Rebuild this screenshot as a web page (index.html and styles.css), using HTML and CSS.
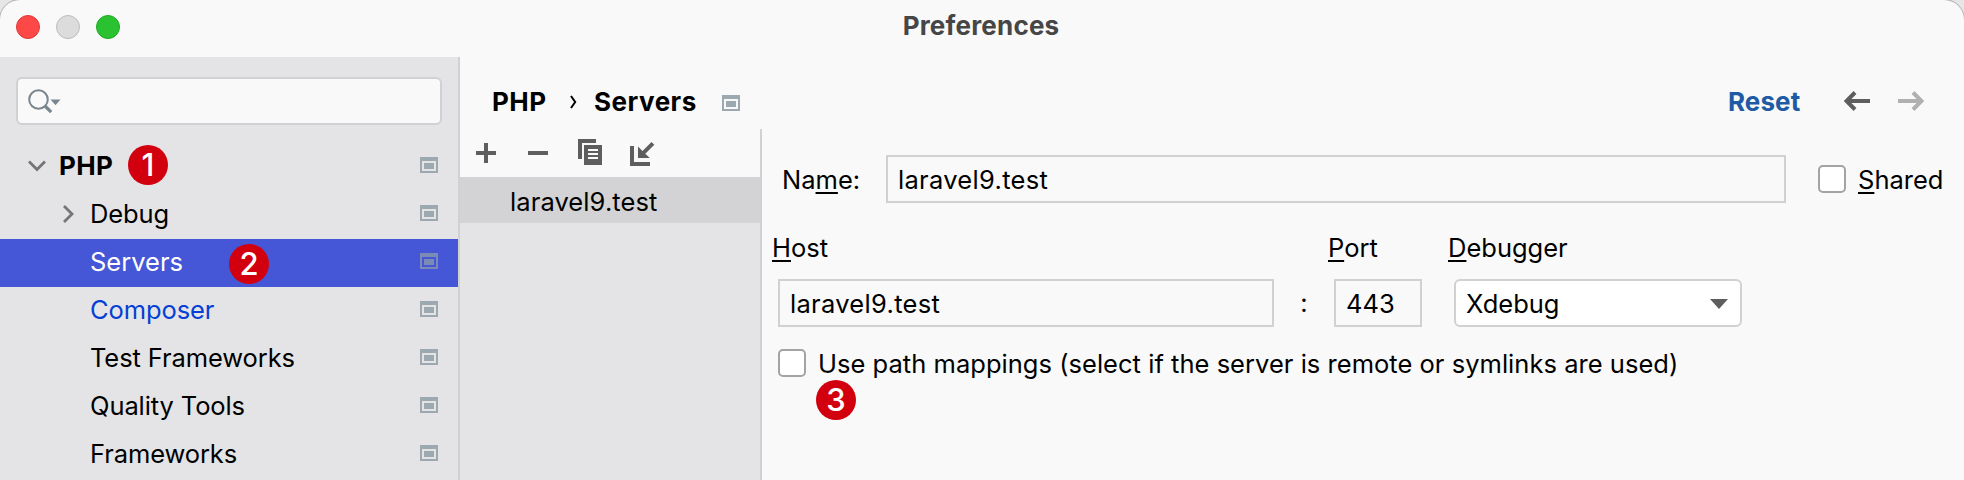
FILE: index.html
```html
<!DOCTYPE html>
<html lang="en">
<head>
<meta charset="utf-8">
<title>Preferences</title>
<link rel="stylesheet" href="styles.css">
</head>
<body>
<svg class="defs" width="0" height="0" aria-hidden="true">
  <symbol id="project" viewBox="0 0 18 16"><path fill-rule="evenodd" d="M0 0H18V16H0ZM2 4V14H16V4Z"/><path d="M4 6H14V12H4Z"/></symbol>
</svg>
<div class="window">
  <header class="titlebar">
    <div class="lights"><i class="light red"></i><i class="light gray"></i><i class="light green"></i></div>
    <h1 class="title">Preferences</h1>
  </header>
  <div class="body">
    <aside class="sidebar">
      <div class="search">
        <svg width="34" height="26" viewBox="0 0 34 26"><circle cx="10.5" cy="10.5" r="9.3" fill="none" stroke="#7a868e" stroke-width="2"/><path d="M17 17L23.2 23.2" stroke="#7a868e" stroke-width="3.2"/><path d="M22.5 10.5H32.500L27.500 16.2Z" fill="#7a868e"/></svg>
      </div>
      <nav class="tree">
        <div class="row root"><svg class="chev" width="20" height="20" viewBox="0 0 20 20"><path d="M2 5.500L10 13.500L18 5.500"/></svg><span class="label">PHP</span><b class="badge b1">1</b><svg class="proj"><use href="#project"/></svg></div>
        <div class="row"><svg class="chev" width="20" height="20" viewBox="0 0 20 20"><path d="M8 2L16 10L8 18"/></svg><span class="label">Debug</span><svg class="proj"><use href="#project"/></svg></div>
        <div class="row leaf selected"><span class="label">Servers</span><b class="badge b2">2</b><svg class="proj"><use href="#project"/></svg></div>
        <div class="row leaf link"><span class="label">Composer</span><svg class="proj"><use href="#project"/></svg></div>
        <div class="row leaf"><span class="label">Test Frameworks</span><svg class="proj"><use href="#project"/></svg></div>
        <div class="row leaf"><span class="label">Quality Tools</span><svg class="proj"><use href="#project"/></svg></div>
        <div class="row leaf"><span class="label">Frameworks</span><svg class="proj"><use href="#project"/></svg></div>
      </nav>
    </aside>
    <main class="main">
      <div class="crumbs">
        <span class="crumb c1">PHP</span>
        <svg class="sep" width="7" height="14" viewBox="0 0 7 14"><path d="M1 1L5.200 7L1 13" fill="none" stroke="#000" stroke-width="2"/></svg>
        <span class="crumb c2">Servers</span>
        <svg class="proj"><use href="#project"/></svg>
        <span class="reset">Reset</span>
        <svg class="arrow" width="26" height="20" viewBox="0 0 26 20"><path d="M26 10H3M11 1.500L2.500 10L11 18.500"/></svg>
        <svg class="arrow off" width="26" height="20" viewBox="0 0 26 20"><path d="M0 10H23M15 1.500L23.500 10L15 18.500"/></svg>
      </div>
      <div class="content">
        <section class="list">
          <div class="toolbar">
            <svg width="20" height="20" viewBox="0 0 20 20"><path d="M8 0h4v8h8v4h-8v8h-4v-8H0V8h8Z"/></svg>
            <svg width="20" height="20" viewBox="0 0 20 20"><path d="M0 8h20v4H0Z"/></svg>
            <svg class="copy" width="24" height="26" viewBox="0 0 24 26"><path d="M0 0H18V4H4V20H0Z"/><path fill-rule="evenodd" d="M6 6H24V26H6ZM10 10V12H20V10ZM10 14V16H20V14ZM10 18V20H20V18Z"/></svg>
            <svg class="import" width="25" height="25" viewBox="0 0 25 25"><path d="M0 5H4V21H20V25H0Z"/><path d="M8 5.500L12.500 10L21.500 1L24.300 3.800L15.300 12.800L19.800 17H8Z"/></svg>
          </div>
          <div class="item">laravel9.test</div>
        </section>
        <form class="form">
          <div class="name-row"><label class="name">Na<u>m</u>e:</label><div class="field grow">laravel9.test</div><i class="check"></i><label class="shared"><u>S</u>hared</label></div>
          <div class="labels"><label><u>H</u>ost</label><label><u>P</u>ort</label><label><u>D</u>ebugger</label></div>
          <div class="fields"><div class="field host">laravel9.test</div><span class="colon">:</span><div class="field port">443</div><div class="field select"><span>Xdebug</span><svg width="18" height="10" viewBox="0 0 18 10"><path d="M0 0H18L9 10Z" fill="#5e5e5e"/></svg></div></div>
          <div class="mapping"><i class="check"></i><label>Use path mappings (select if the server is remote or symlinks are used)</label><b class="badge b3">3</b></div>
        </form>
      </div>
    </main>
  </div>
</div>
</body>
</html>
```
FILE: styles.css
```css
* { box-sizing: border-box; }
body { margin: 0; background: #e6e6e6; font: 25.5px/46px Inter, "Liberation Sans", sans-serif; color: #000; }
svg { display: block; flex: none; }
.defs { position: absolute; }
.window { width: 1964px; height: 480px; overflow: hidden; display: flex; flex-direction: column; background: #f9f9f9; border-radius: 20px 20px 0 0; box-shadow: 0 0 0 1px #b5b5b5; }
.titlebar { height: 57px; flex: none; display: grid; grid-template-columns: 1fr auto 1fr; padding: 0 16px; }
.lights { display: flex; gap: 16px; padding-top: 15px; }
.light { width: 24px; height: 24px; border-radius: 50%; border: 1px solid; }
.red { background: #fc4948; border-color: #e0383a; }
.gray { background: #dcdcdc; border-color: #bcbcbc; }
.green { background: #2bc232; border-color: #1fa823; }
.title { margin: 0 2px 0 0; font-size: 26px; line-height: 51px; letter-spacing: 0.2px; font-weight: 700; color: #464646; }
.body { flex: 1; display: flex; min-height: 0; }
.sidebar { width: 460px; flex: none; background: #e4e4e6; border-right: 2px solid #d1d1d3; padding-top: 20px; }
.search { margin: 0 16px; width: 426px; height: 48px; border: 2px solid #d1d1d3; border-radius: 6px; background: #f9f9f9; padding: 10px 0 0 10px; }
.tree { padding-top: 18px; }
.row { position: relative; height: 48px; display: flex; align-items: center; padding: 0 20px 2px 56px; letter-spacing: -0.1px; }
.row.root { padding-left: 27px; }
.row.leaf { padding-left: 90px; }
.root .label { font-weight: 700; font-size: 26px; letter-spacing: 0.4px; }
.row .chev { margin-right: 14px; fill: none; stroke: #757575; stroke-width: 2.8; }
.root .chev { margin-right: 12px; }
.proj { width: 18px; height: 16px; fill: #9da9b1; }
.row .proj { margin-left: auto; margin-top: -2px; }
.selected { background: #4556d7; color: #fff; letter-spacing: 0; }
.selected .proj { fill: #7c8bb3; }
.link { color: #0540d6; }
.badge { position: absolute; width: 40px; height: 40px; border-radius: 50%; background: #d2000f; color: #fff; font-size: 31px; line-height: 40px; font-weight: 500; text-align: center; letter-spacing: 0; }
.b1 { left: 128px; top: 2px; }
.b2 { left: 229px; top: 5px; }
.b3 { left: 38px; top: 41px; }
.main { flex: 1; display: flex; flex-direction: column; min-width: 0; }
.crumbs { height: 72px; flex: none; display: flex; align-items: center; padding: 18px 40px 0 32px; font-weight: 700; font-size: 26px; line-height: 54px; letter-spacing: 0.5px; }
.crumb.c1 { width: 78px; }
.sep { margin-right: 17px; }
.crumb.c2 { width: 128px; }
.crumbs .proj { margin-top: 2px; }
.reset { margin-left: auto; width: 116px; color: #1f5ba5; letter-spacing: 0.1px; }
.arrow { margin-top: -2px; fill: none; stroke: #5e5e5e; stroke-width: 4; }
.arrow.off { margin-left: 28px; stroke: #b0b0b0; }
.crumb, .reset { margin-top: -1px; }
.content { flex: 1; display: flex; min-height: 0; }
.list { width: 302px; flex: none; border-right: 2px solid #d1d1d3; background: #e4e4e6; }
.toolbar { height: 48px; display: flex; gap: 32px; align-items: flex-start; padding: 14px 0 0 16px; background: #f9f9f9; fill: #5e5e5e; }
.copy { margin: -4px 0 0 -2px; }
.import { margin: -2px 0 0 -4px; }
.item { height: 46px; padding: 2px 0 0 50px; background: #d3d3d5; letter-spacing: 0.1px; }
.form { flex: 1; margin: 0; padding: 26px 0 0 10px; min-width: 0; }
.form u { text-decoration: underline 2px; text-underline-offset: 3px; text-decoration-skip-ink: none; }
.name-row { display: flex; align-items: center; padding-left: 10px; height: 48px; }
.name-row label { padding-top: 1px; }
.name { width: 104px; }
.field { height: 48px; border: 2px solid #d1d1d1; padding: 1px 0 0 10px; line-height: 44px; letter-spacing: 0.3px; }
.name-row .field { width: 900px; }
.check { width: 28px; height: 28px; flex: none; border: 2px solid #a3a3a3; border-radius: 5px; background: #fff; }
.name-row .check { margin: 0 12px 0 32px; }
.labels { display: grid; grid-template-columns: 556px 120px 1fr; padding-top: 22px; height: 76px; }
.fields { display: flex; align-items: center; padding-left: 6px; }
.host { width: 496px; }
.colon { width: 60px; text-align: center; }
.port { width: 88px; margin-right: 32px; letter-spacing: 0; }
.select { width: 288px; border-radius: 6px; background: #fff; display: flex; align-items: center; justify-content: space-between; padding-right: 12px; letter-spacing: 0; }
.mapping { position: relative; display: flex; align-items: center; gap: 12px; margin: 12px 0 0 6px; height: 48px; letter-spacing: 0.03px; }
.mapping label { padding-top: 2px; }
```
